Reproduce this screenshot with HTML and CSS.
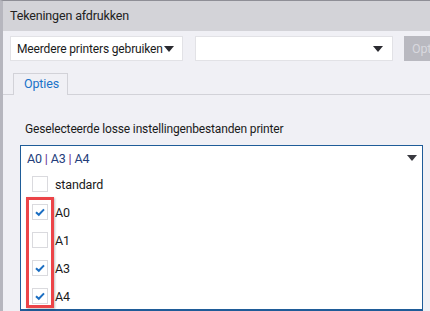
FILE: index.html
```html
<!DOCTYPE html>
<html>
<head>
<meta charset="utf-8">
<link rel="stylesheet" href="styles.css">
</head>
<body>
<div class="window">
  <div class="titlebar">Tekeningen afdrukken</div>
  <div class="toolbar">
    <div class="select select-printers"><span>Meerdere printers gebruiken</span><span class="caret"></span></div>
    <div class="select select-empty"><span></span><span class="caret"></span></div>
    <div class="btn"><span>Opties</span></div>
  </div>
  <div class="tabs">
    <div class="tab">Opties</div>
  </div>
  <div class="panel">
    <div class="label">Geselecteerde losse instellingenbestanden printer</div>
    <div class="multi">
      <div class="multi-head">
        <span class="value">A0 <i>|</i> A3 <i>|</i> A4</span>
        <span class="caret"></span>
      </div>
      <div class="list">
        <div class="item"><span class="cb"></span><span>standard</span></div>
        <div class="item"><span class="cb"><svg viewBox="0 0 16 16" width="16" height="16"><path d="M4 8.2 L6.8 10.8 L12 5.4" fill="none" stroke="#1b6ec2" stroke-width="2"/></svg></span><span>A0</span></div>
        <div class="item"><span class="cb"></span><span>A1</span></div>
        <div class="item"><span class="cb"><svg viewBox="0 0 16 16" width="16" height="16"><path d="M4 8.2 L6.8 10.8 L12 5.4" fill="none" stroke="#1b6ec2" stroke-width="2"/></svg></span><span>A3</span></div>
        <div class="item"><span class="cb"><svg viewBox="0 0 16 16" width="16" height="16"><path d="M4 8.2 L6.8 10.8 L12 5.4" fill="none" stroke="#1b6ec2" stroke-width="2"/></svg></span><span>A4</span></div>
        <div class="highlight"></div>
      </div>
    </div>
  </div>
</div>
</body>
</html>
```
FILE: styles.css
```css
html, body {
  margin: 0;
  padding: 0;
  width: 430px;
  height: 311px;
  overflow: hidden;
  background: #f0f0f4;
  font-family: Roboto, "Noto Sans", sans-serif;
  font-size: 12px;
  letter-spacing: -0.15px;
  color: #1a1a1a;
}
.window {
  height: 311px;
  border-left: 3px solid #b6b6be;
  border-top: 1px solid #8e8e96;
  box-sizing: border-box;
  background: #f0f0f5;
}
.titlebar {
  height: 30px;
  background: #d3d3d8;
  padding-left: 7px;
  line-height: 29px;
  font-size: 12.5px;
  color: #222;
}
.toolbar {
  display: flex;
  padding: 5px 0 0 7px;
  height: 25px;
}
.select {
  flex: none;
  box-sizing: border-box;
  height: 25px;
  background: #fff;
  border: 1px solid #e2e2e6;
  display: flex;
  align-items: center;
  justify-content: space-between;
  padding: 0 8px 0 6px;
  font-size: 12px;
  white-space: nowrap;
}
.select-printers { width: 173px; }
.select-empty { width: 198px; margin-left: 12px; padding-right: 9px; }
.caret {
  flex: none;
  width: 0;
  height: 0;
  border-left: 5px solid transparent;
  border-right: 5px solid transparent;
  border-top: 6px solid #2a2a30;
}
.btn {
  margin-left: 11px;
  height: 25px;
  flex: 1;
  min-width: 0;
  overflow: hidden;
  white-space: nowrap;
  background: #b9b9c0;
  color: #d8d8de;
  font-size: 12.5px;
  line-height: 25px;
  padding-left: 8px;
  box-sizing: border-box;
}
.tabs {
  margin-top: 12px;
  padding-left: 10px;
  border-bottom: 1px solid #d2d2d8;
  height: 21px;
  display: flex;
}
.tab {
  width: 55px;
  height: 22px;
  box-sizing: border-box;
  border: 1px solid #d2d2d8;
  border-bottom: none;
  background: #f0f0f5;
  color: #1a73c9;
  font-size: 12.5px;
  padding-left: 10px;
  line-height: 20px;
}
.panel {
  padding: 26px 0 0 17px;
}
.label {
  font-size: 12px;
  line-height: 16px;
  padding-left: 5px;
  color: #1a1a1a;
}
.multi {
  margin-top: 8px;
  width: 403px;
  height: 166px;
  box-sizing: border-box;
  background: #fff;
  border: 1px solid #1f5c98;
  border-bottom-width: 2px;
}
.multi-head {
  height: 24px;
  display: flex;
  align-items: center;
  justify-content: space-between;
  padding: 0 5px 0 6px;
}
.multi-head .caret {
  border-top-color: #3a3a40;
}
.value {
  font-size: 12.5px;
  color: #233d7a;
}
.value i {
  font-style: normal;
  color: #6a2c8f;
}
.list {
  position: relative;
  padding-left: 11px;
}
.item {
  height: 28px;
  display: flex;
  align-items: center;
  gap: 7px;
  font-size: 12.5px;
}
.cb {
  width: 16px;
  height: 16px;
  box-sizing: border-box;
  border: 1px solid #dadade;
  background: #fff;
  display: flex;
}
.cb svg {
  margin: -1px;
}
.highlight {
  position: absolute;
  left: 5px;
  top: 27px;
  width: 28px;
  height: 111px;
  box-sizing: border-box;
  border: 3px solid #ec4448;
  box-shadow: 1px 1px 2px rgba(0,0,0,0.25);
}
```
